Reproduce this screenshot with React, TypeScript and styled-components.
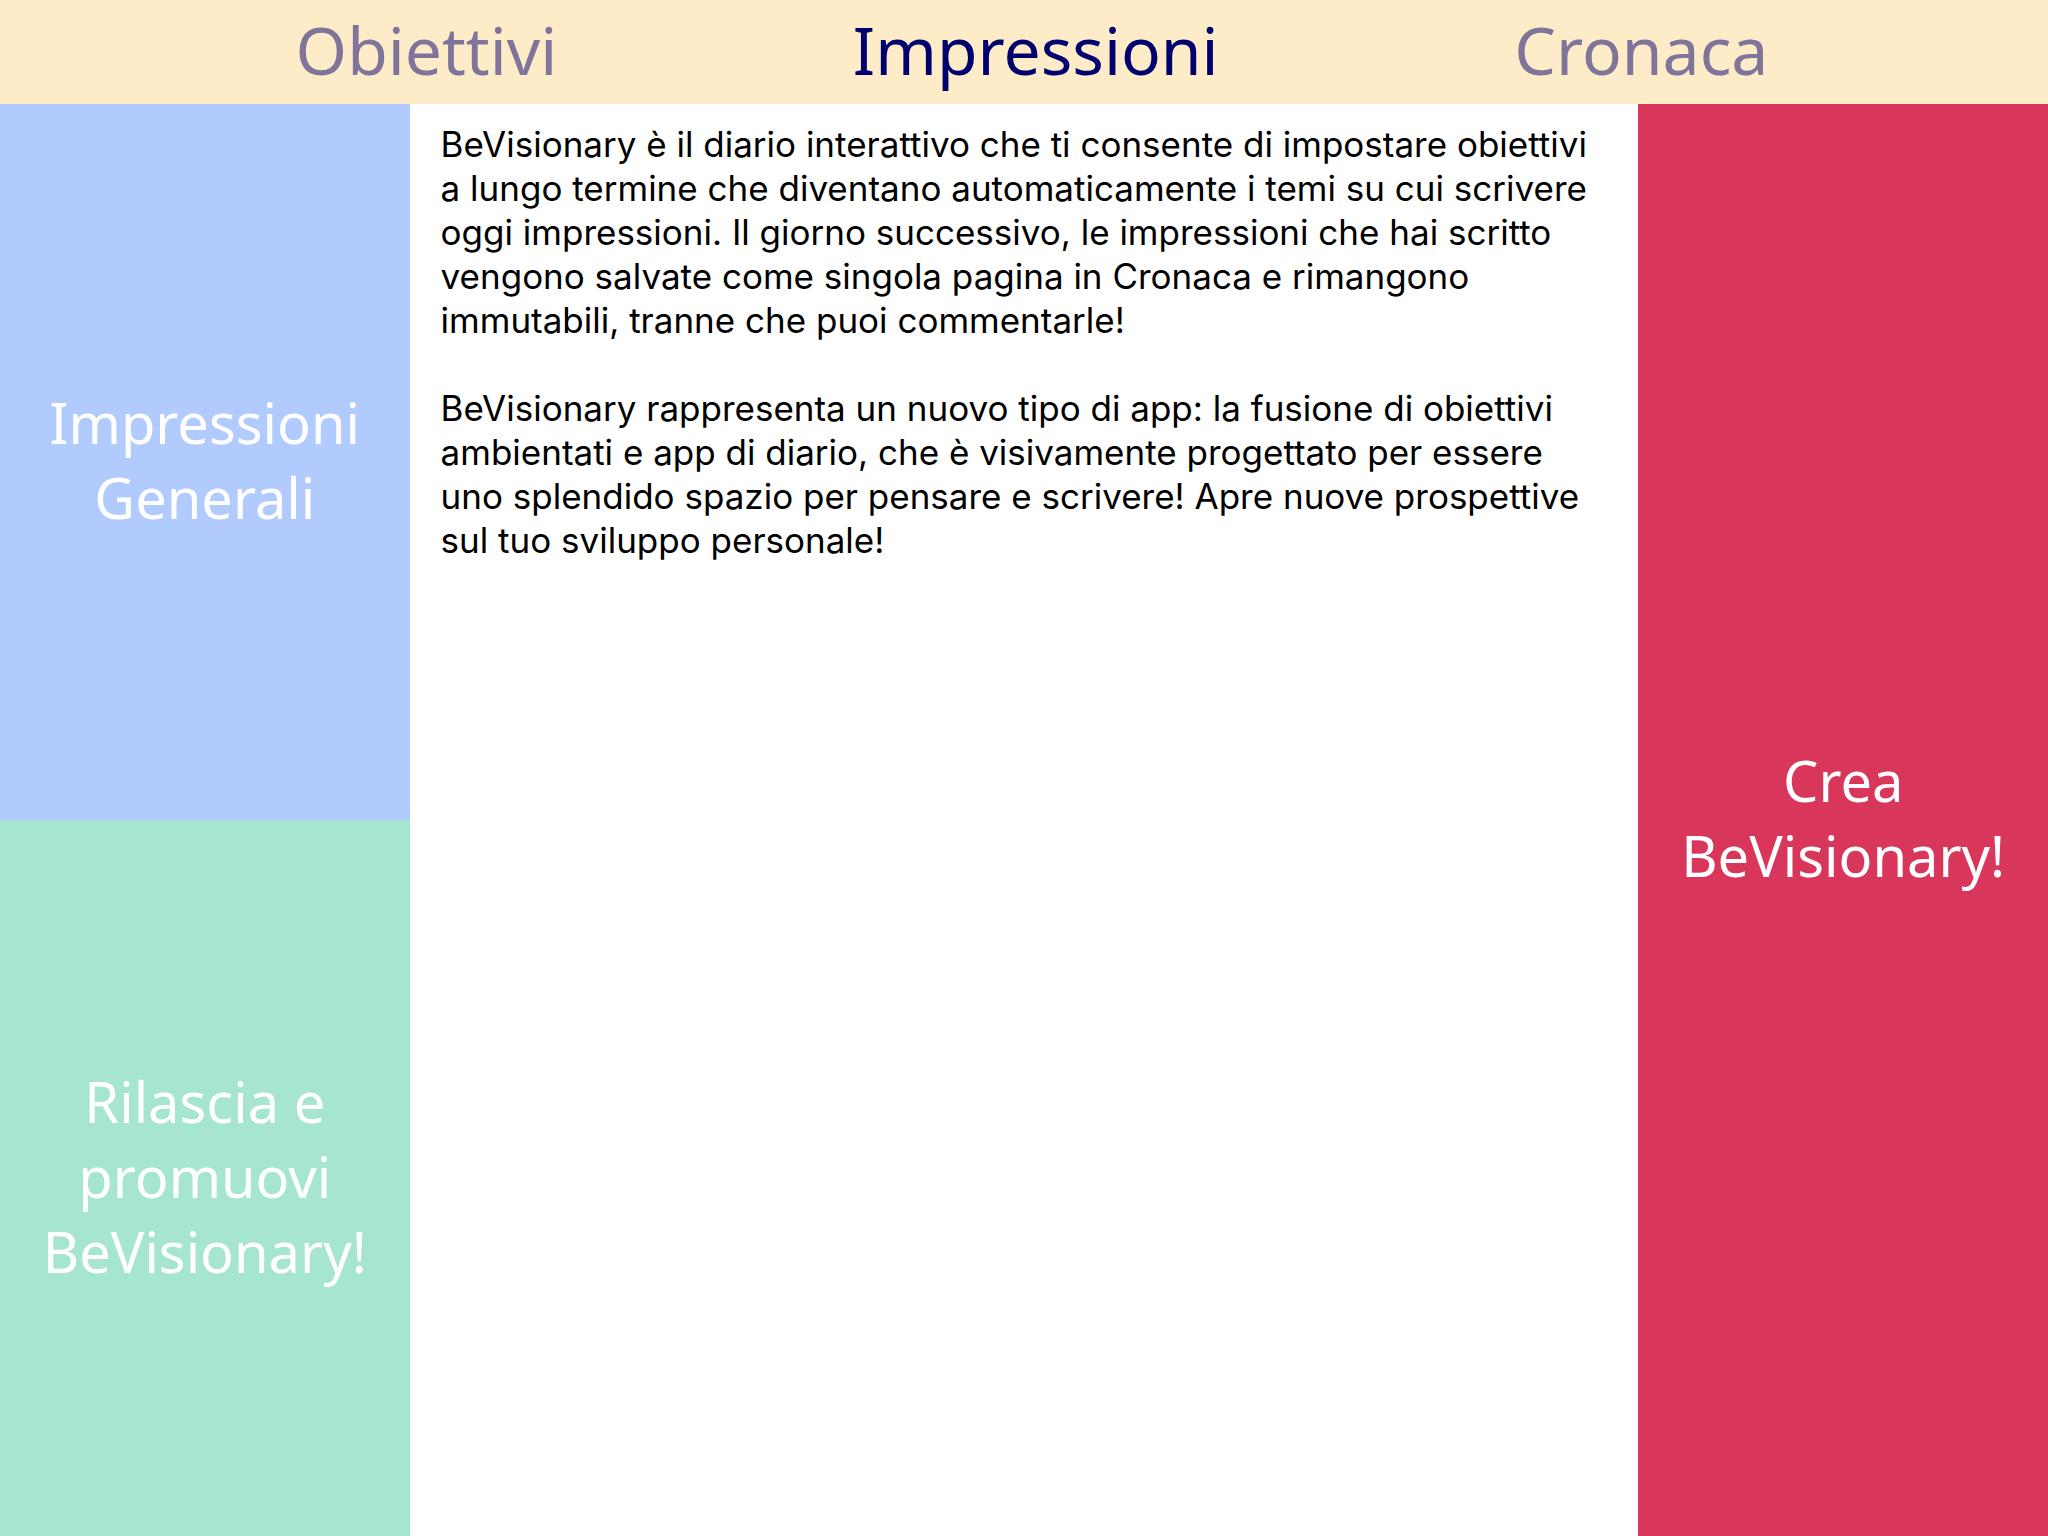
import React, { useState } from "react";
import styled, { createGlobalStyle } from "styled-components";

const GlobalStyle = createGlobalStyle`
  * { box-sizing: border-box; }
  body { margin: 0; background: #ffffff; }
`;

const Page = styled.div`
  display: flex;
  flex-direction: column;
  min-height: 100vh;
  font-family: "Noto Sans", "Open Sans", sans-serif;
`;

const TabBar = styled.nav`
  display: flex;
  justify-content: space-evenly;
  align-items: center;
  gap: 16px;
  height: 104px;
  padding: 0 0 6px 16px;
  background: #feebc8;
`;

const Tab = styled.button<{ $active: boolean }>`
  padding: 0;
  border: 0;
  background: none;
  font-family: inherit;
  font-size: 66px;
  line-height: 88px;
  color: ${(p) => (p.$active ? "#00006e" : "#7f759b")};
  cursor: pointer;
`;

const Workspace = styled.div`
  display: grid;
  grid-template-columns: 1fr 3fr 1fr;
  flex: 1;
`;

const Side = styled.aside`
  display: flex;
  flex-direction: column;
`;

const Theme = styled.button<{ $color: string }>`
  flex: 1;
  padding: 0 32px 4px;
  border: 0;
  background: ${(p) => p.$color};
  color: #ffffff;
  font-family: inherit;
  font-size: 56px;
  line-height: 75px;
  cursor: pointer;
`;

const Editor = styled.textarea`
  display: block;
  width: 100%;
  height: 100%;
  padding: 18px 31px;
  border: 0;
  outline: 0;
  resize: none;
  background: #ffffff;
  color: #000000;
  font-family: Inter, "Liberation Sans", sans-serif;
  font-size: 35px;
  line-height: 44px;
`;

const tabs = ["Obiettivi", "Impressioni", "Cronaca"];

const entry = `BeVisionary è il diario interattivo che ti consente di impostare obiettivi a lungo termine che diventano automaticamente i temi su cui scrivere oggi impressioni. Il giorno successivo, le impressioni che hai scritto vengono salvate come singola pagina in Cronaca e rimangono immutabili, tranne che puoi commentarle!

BeVisionary rappresenta un nuovo tipo di app: la fusione di obiettivi ambientati e app di diario, che è visivamente progettato per essere uno splendido spazio per pensare e scrivere! Apre nuove prospettive sul tuo sviluppo personale!`;

export default function App() {
  const [active, setActive] = useState("Impressioni");
  return (
    <Page>
      <GlobalStyle />
      <TabBar>
        {tabs.map((tab) => (
          <Tab key={tab} $active={tab === active} onClick={() => setActive(tab)}>
            {tab}
          </Tab>
        ))}
      </TabBar>
      <Workspace>
        <Side>
          <Theme $color="#b1cbff">Impressioni Generali</Theme>
          <Theme $color="#a6e5d0">Rilascia e promuovi BeVisionary!</Theme>
        </Side>
        <Editor aria-label="Impressioni" spellCheck={false} defaultValue={entry} />
        <Side>
          <Theme $color="#d9365c">Crea BeVisionary!</Theme>
        </Side>
      </Workspace>
    </Page>
  );
}
